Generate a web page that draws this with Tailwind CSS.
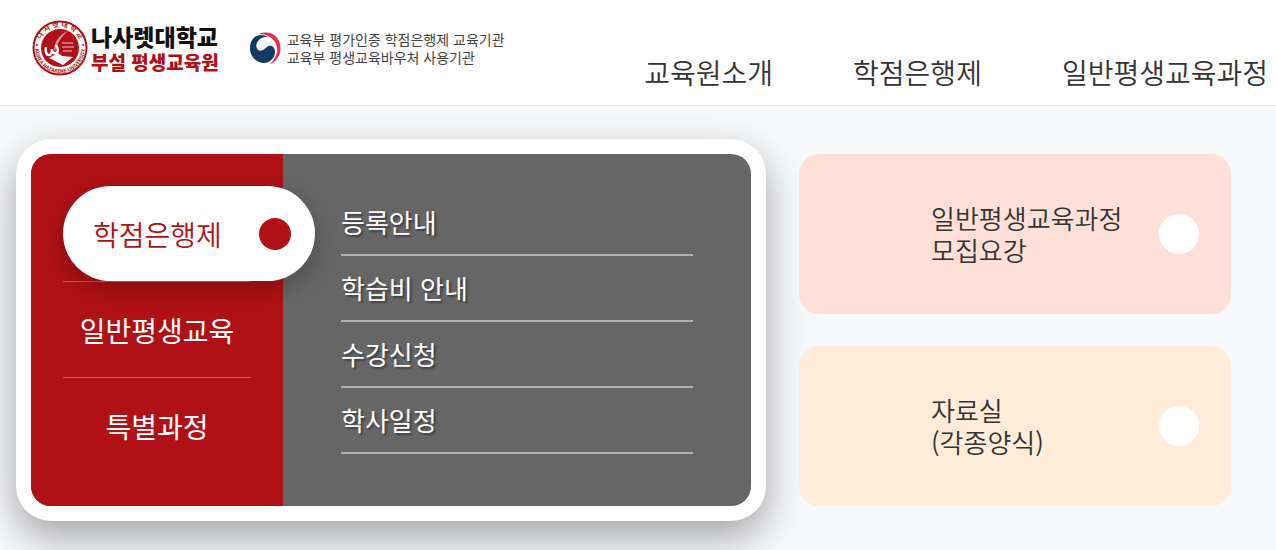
<!DOCTYPE html>
<html lang="ko">
<head>
    <meta charset="UTF-8">
    <meta name="viewport" content="width=device-width, initial-scale=1.0">
    <title>나사렛대학교 부설 평생교육원</title>
    <script src="https://cdn.jsdelivr.net/npm/@tailwindcss/browser@4"></script>
</head>
<body class="min-h-screen bg-[#f8f9fb] font-['Noto_Sans_CJK_KR',sans-serif] text-[#333]">

    <!-- Header -->
    <header class="flex items-start justify-between border-b border-[#dcdfe2] bg-white pl-8 pr-2">
        <div class="flex items-center gap-7 pt-5">
            <a href="#" class="flex items-center gap-[3px]">
                <svg class="size-14" viewBox="0 0 56 56" aria-hidden="true">
                    <defs>
                        <path id="ringTop" d="M7 28a21 21 0 0 1 42 0"/>
                        <path id="ringBottom" d="M3 28a25 25 0 0 0 50 0"/>
                    </defs>
                    <circle cx="28" cy="28" r="26.5" fill="#fff" stroke="#b01116" stroke-width="2"/>
                    <circle cx="28" cy="28" r="19" fill="#b01116"/>
                    <g fill="#b01116" font-weight="bold">
                        <text font-size="7" text-anchor="middle"><textPath href="#ringTop" startOffset="50%">나 사 렛 대 학 교</textPath></text>
                        <text font-size="5" text-anchor="middle"><textPath href="#ringBottom" startOffset="50%">KOREA NAZARENE UNIVERSITY</textPath></text>
                    </g>
                    <circle cx="5" cy="25" r="1" fill="#b01116"/>
                    <circle cx="51" cy="25" r="1" fill="#b01116"/>
                    <path d="M36 11c-8 3-13 10-14 18l1 3c2-9 6-15 13-21z" fill="#fff" opacity=".55"/>
                    <path d="M14 27c-1 4 0 8 3 8s3-3 3-6c0 3 1 5 4 4s2-5 0-8" fill="none" stroke="#fff" stroke-width="2.4"/>
                    <path d="M17 38l9-5 4 3 11 1-10 8-6-3z" fill="#fff"/>
                    <path d="M30 23h11M30 27h12M31 31h9" stroke="#fff" stroke-width="1.4" opacity=".5"/>
                </svg>
                <span class="flex flex-col font-black">
                    <span class="text-[23px] leading-7 text-[#111]">나사렛대학교</span>
                    <span class="text-[19px] leading-6 text-[#b01116]">부설 평생교육원</span>
                </span>
            </a>
            <div class="flex items-center gap-1">
                <svg class="size-9" viewBox="0 0 36 36" aria-hidden="true">
                    <path d="M12 4C22 0 31 5 33 14 35 23 31 31 23 34 29 28 32 21 29 14 26 7 19 4 12 4z" fill="#e5304a"/>
                    <path d="M21 7C14 3 7 5 4 12 1 21 5 29 12 32 20 35 28 30 28 22 28 17 24 14 20 17 16 20 14 22 11 20 8 17 9 12 13 9 16 7 18 7 21 7z" fill="#123a63"/>
                </svg>
                <p class="text-sm leading-[18px] text-[#444]">교육부 평가인증 학점은행제 교육기관<br>교육부 평생교육바우처 사용기관</p>
            </div>
        </div>
        <nav class="flex gap-20 pb-[13px] pt-13 text-[28px] leading-10 font-[350] whitespace-nowrap">
            <a href="#" class="hover:text-[#b01116]">교육원소개</a>
            <a href="#" class="hover:text-[#b01116]">학점은행제</a>
            <a href="#" class="hover:text-[#b01116]">일반평생교육과정</a>
        </nav>
    </header>

    <main class="grid grid-cols-[750fr_432fr] gap-[33px] pb-7 pl-4 pr-[45px] pt-[33px]">
        <!-- Course menu -->
        <section class="rounded-[35px] bg-white p-[15px] shadow-[0_16px_40px_rgba(0,0,0,0.35)]">
            <div class="flex min-h-[352px] rounded-[20px] bg-[#666]">
                <div class="w-[252px] shrink-0 rounded-l-[20px] bg-[#b01116] p-8 text-[28px] whitespace-nowrap text-white">
                    <div class="border-b border-white/30">
                        <button type="button" class="relative flex h-[95px] w-[252px] items-center justify-between rounded-full bg-white pl-[30px] pr-6 font-[350] text-[#b01116] shadow-[0_8px_24px_rgba(0,0,0,0.25)]">
                            학점은행제
                            <span class="size-8 rounded-full bg-[#b01116]"></span>
                        </button>
                    </div>
                    <div class="border-b border-white/30">
                        <button type="button" class="h-[95px] w-full">일반평생교육</button>
                    </div>
                    <button type="button" class="h-[95px] w-full">특별과정</button>
                </div>
                <ul class="flex-1 px-[58px] pt-9 text-[26px] text-white text-shadow-[2px_2px_2px_rgba(0,0,0,0.4)]">
                    <li class="border-b-2 border-[#b2b2b2]"><a href="#" class="block leading-[64px]">등록안내</a></li>
                    <li class="border-b-2 border-[#b2b2b2]"><a href="#" class="block leading-[64px]">학습비 안내</a></li>
                    <li class="border-b-2 border-[#b2b2b2]"><a href="#" class="block leading-[64px]">수강신청</a></li>
                    <li class="border-b-2 border-[#b2b2b2]"><a href="#" class="block leading-[64px]">학사일정</a></li>
                </ul>
            </div>
        </section>

        <!-- Quick links -->
        <section class="flex flex-col gap-8 pt-[15px] text-[26px] leading-8 font-[350]">
            <a href="#" class="flex h-40 items-center justify-between rounded-[20px] bg-[#ffe0d9] pl-[132px] pr-8">
                <span>일반평생교육과정<br>모집요강</span>
                <span class="size-10 rounded-full bg-white"></span>
            </a>
            <a href="#" class="flex h-40 items-center justify-between rounded-[20px] bg-[#ffecd9] pl-[132px] pr-8">
                <span>자료실<br>(각종양식)</span>
                <span class="size-10 rounded-full bg-white"></span>
            </a>
        </section>
    </main>

</body>
</html>
